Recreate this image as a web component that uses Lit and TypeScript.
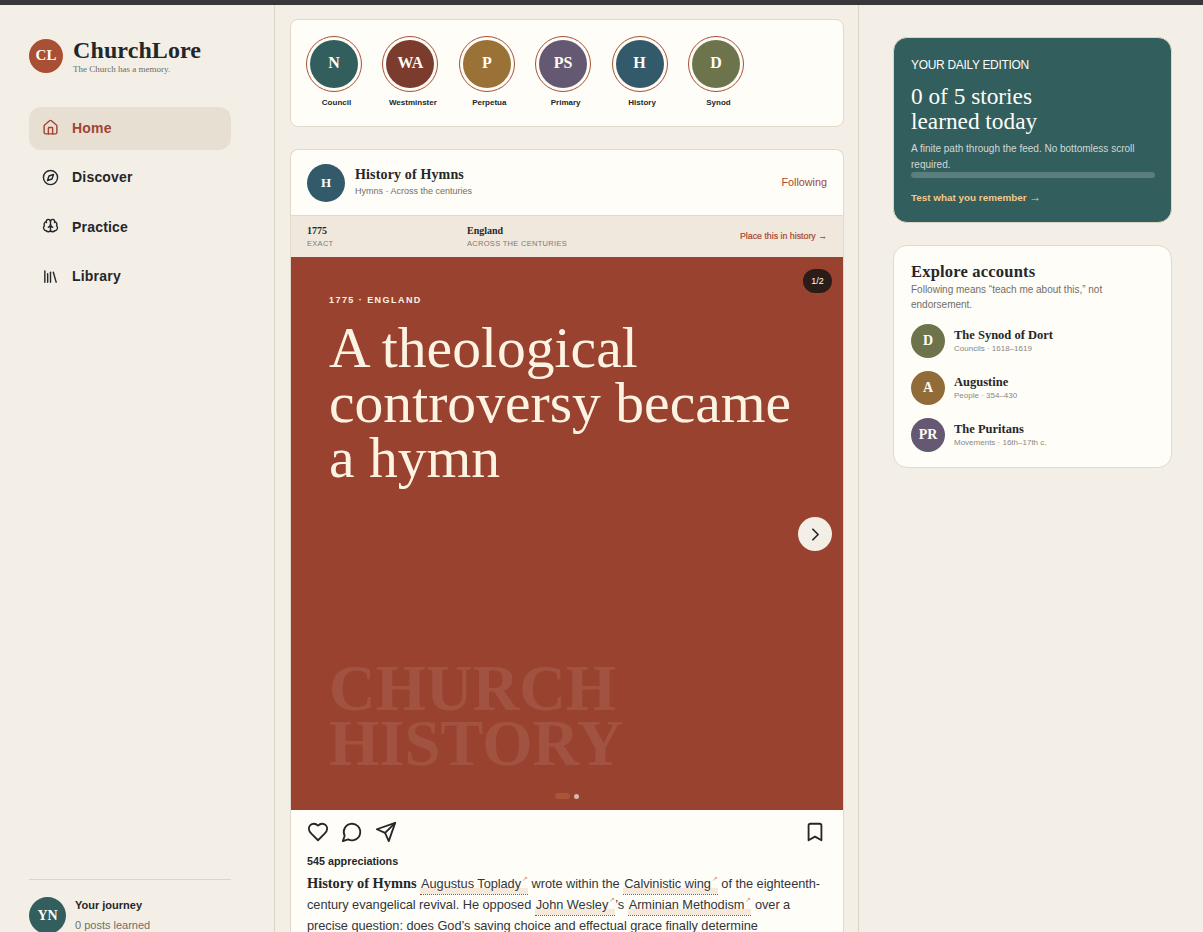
import { LitElement, html, css, svg } from "lit";
import { customElement } from "lit/decorators.js";

const stories = [
  ["N", "Council", "#325e5e"],
  ["WA", "Westminster", "#7b3c2e"],
  ["P", "Perpetua", "#9a7238"],
  ["PS", "Primary", "#655872"],
  ["H", "History", "#335a6a"],
  ["D", "Synod", "#6d744c"],
];
const accounts = [
  ["D", "The Synod of Dort", "Councils · 1618–1619", "#6d744c"],
  ["A", "Augustine", "People · 354–430", "#916c38"],
  ["PR", "The Puritans", "Movements · 16th–17th c.", "#655872"],
];
const ic = (body: unknown, size = 18, sw = 2) => html`<svg width=${size} height=${size} viewBox="0 0 24 24" fill="none" stroke="currentColor" stroke-width=${sw} stroke-linecap="round" stroke-linejoin="round">${body}</svg>`;
const home = svg`<path d="M15 21v-8a1 1 0 0 0-1-1h-4a1 1 0 0 0-1 1v8"/><path d="M3 10a2 2 0 0 1 .709-1.528l7-6a2 2 0 0 1 2.582 0l7 6A2 2 0 0 1 21 10v9a2 2 0 0 1-2 2H5a2 2 0 0 1-2-2z"/>`;
const compass = svg`<circle cx="12" cy="12" r="10"/><path d="m16.24 7.76-2.12 6.36-6.36 2.12 2.12-6.36z"/>`;
const brain = svg`<path d="M12 18V5"/><path d="M15 13a4.17 4.17 0 0 1-3-4 4.17 4.17 0 0 1-3 4"/><path d="M17.6 6.5A3 3 0 1 0 12 5a3 3 0 1 0-5.6 1.5"/><path d="M18 5.1a4 4 0 0 1 2.5 5.9 4 4 0 0 1-2.5 7"/><path d="M18 18a4 4 0 0 1-6 0 4 4 0 0 1-6 0"/><path d="M6 18a4 4 0 0 1-2.5-7A4 4 0 0 1 6 5.1"/>`;
const library = svg`<path d="m16 6 4 14"/><path d="M12 6v14"/><path d="M8 8v12"/><path d="M4 4v16"/>`;
const heart = svg`<path d="M19 14c1.49-1.46 3-3.21 3-5.5A5.5 5.5 0 0 0 16.5 3c-1.76 0-3 .5-4.5 2-1.5-1.5-2.74-2-4.5-2A5.5 5.5 0 0 0 2 8.5c0 2.3 1.5 4.05 3 5.5l7 7Z"/>`;
const comment = svg`<path d="M7.9 20A9 9 0 1 0 4 16.1L2 22Z"/>`;
const send = svg`<path d="M22 2 11 13"/><path d="M22 2 15 22l-4-9-9-4Z"/>`;
const bookmark = svg`<path d="m19 21-7-4-7 4V5a2 2 0 0 1 2-2h10a2 2 0 0 1 2 2v16z"/>`;
const chevron = svg`<path d="m9 18 6-6-6-6"/>`;

@customElement("app-root")
export class AppRoot extends LitElement {
  static styles = css`
    :host { display: block; height: 932px; overflow: hidden; background: #f4efe6; color: #24272a; font-family: "Liberation Sans", Arial, sans-serif; }
    * { box-sizing: border-box; }
    .topbar { height: 5px; background: #38383b; }
    .page { display: grid; grid-template-columns: 275px 584px 1fr; height: 927px; }

    .side { border-right: 1px solid #dcd5c7; padding: 33px 43px 15px 29px; display: flex; flex-direction: column; }
    .brand { display: flex; gap: 10px; height: 35px; align-items: flex-start; }
    .avatar { flex: none; border-radius: 50%; display: flex; align-items: center; justify-content: center; color: #fffdf8; font-family: "Liberation Serif", serif; font-weight: 700; }
    .brand .avatar { width: 34px; height: 34px; background: #a94f33; font-size: 15px; align-self: center; }
    .brand-name { font-family: "Liberation Serif", serif; font-weight: 700; font-size: 24px; line-height: 25px; letter-spacing: 0.1px; }
    .brand-sub { font-family: "Liberation Serif", serif; font-size: 9px; line-height: 11px; margin-top: 1px; color: #6b6b66; }
    nav { margin-top: 34px; display: flex; flex-direction: column; gap: 6.5px; }
    .nav-item { display: flex; align-items: center; gap: 13px; height: 43px; padding: 0 13px 2px; border-radius: 12px; font-weight: 700; font-size: 14px; letter-spacing: 0.2px; color: #24272a; }
    .nav-item.active { background: #e8dfd3; color: #9f4532; }
    .nav-item svg { flex: none; width: 17px; height: 17px; }
    .journey { margin-top: auto; border-top: 1px solid #dcd5c7; padding-top: 17px; display: flex; align-items: center; gap: 9px; }
    .journey .avatar { width: 37px; height: 37px; background: #325e5e; font-size: 14px; }
    .journey b { display: block; font-size: 11px; line-height: 15px; margin-bottom: 5px; }
    .journey span { font-size: 11px; line-height: 15px; color: #6f6f6a; display: block; }

    .main { border-right: 1px solid #dcd5c7; padding: 14px 14px 0 15px; min-width: 0; }
    .card { background: #fffdf8; border: 1px solid #e1d9ca; border-radius: 8px; }
    .stories { height: 108px; padding: 16px 15px 0; display: flex; gap: 15.4px; }
    .story { width: 61px; flex: none; display: flex; flex-direction: column; align-items: center; }
    .ring { width: 56px; height: 56px; border-radius: 50%; border: 1px solid #a94f33; padding: 3px; align-self: flex-start; }
    .ring .avatar { width: 100%; height: 100%; font-size: 16px; padding-bottom: 2px; }
    .story-label { font-size: 8px; font-weight: 700; line-height: 10px; margin-top: 6px; white-space: nowrap; }
    .post { margin-top: 22px; border-radius: 8px 8px 0 0; border-bottom: 0; overflow: hidden; height: 800px; }
    .post-head { height: 65px; display: flex; align-items: center; padding: 0 16px; gap: 10px; }
    .post-head .avatar { width: 38px; height: 38px; background: #335a6a; font-size: 13px; }
    .post-title { font-family: "Liberation Serif", serif; font-weight: 700; font-size: 14px; line-height: 17px; letter-spacing: 0.15px; margin-top: -1px; }
    .post-sub { font-size: 9px; line-height: 13px; color: #6f6f6a; margin-top: 2px; }
    .following { margin-left: auto; font-size: 10.8px; color: #a8472f; padding-bottom: 2px; }
    .meta { height: 42px; background: #f0e8dc; border-top: 1px solid #e1d9ca; display: flex; align-items: center; padding: 0 16px; }
    .meta-col b { display: block; font-family: "Liberation Serif", serif; font-size: 10px; line-height: 13px; }
    .meta-col span { display: block; font-size: 7.5px; line-height: 11px; letter-spacing: 0.3px; color: #7d7a72; margin-top: 1px; }
    .meta-col.year { width: 160px; }
    .place { margin-left: auto; font-size: 8.8px; color: #a8472f; -webkit-text-stroke: 0.2px #a8472f; padding-bottom: 2px; }
    .slide { position: relative; height: 553px; background: #9a4230; overflow: hidden; padding: 38px 38px; color: #fdf3e3; }
    .kicker { font-size: 9px; font-weight: 700; letter-spacing: 1.45px; line-height: 11px; }
    .headline { font-family: "Liberation Serif", serif; font-size: 57.6px; line-height: 55px; margin-top: 14px; font-weight: 400; }
    .watermark { position: absolute; left: 38px; top: 404px; font-family: "Liberation Serif", serif; font-weight: 700; font-size: 64.6px; line-height: 55px; color: rgba(255,255,255,0.085); }
    .count { position: absolute; right: 11px; top: 12px; width: 29px; height: 24px; border-radius: 12px; background: #2b1c18; color: #fff; font-size: 9px; display: flex; align-items: center; justify-content: center; }
    .next { position: absolute; right: 11px; top: 260px; width: 34px; height: 34px; border-radius: 50%; background: #f4efe6; color: #24272a; display: flex; align-items: center; justify-content: center; }
    .next svg { width: 21px; height: 21px; }
    .dots { position: absolute; left: 264px; bottom: 11px; display: flex; gap: 4px; align-items: center; }
    .dots i { display: block; height: 6px; border-radius: 3px; }
    .dots .on { width: 15px; background: #a9553a; }
    .dots .off { width: 5px; height: 5px; background: #dbb7a8; }
    .actions { display: flex; align-items: center; padding: 0 16px; gap: 12px; height: 44px; color: #24272a; }
    .actions svg { width: 22px; height: 22px; display: block; }
    .actions .save { margin-left: auto; margin-right: 1px; }
    .likes { font-size: 10.8px; font-weight: 700; padding: 0 16px; line-height: 14px; }
    .copy { font-size: 12.8px; line-height: 20.8px; padding: 0 16px; margin-top: 5px; color: #33363a; letter-spacing: -0.05px; }
    .copy b { font-family: "Liberation Serif", serif; font-size: 14.4px; letter-spacing: 0; color: #24272a; }
    .term { background: linear-gradient(transparent 66%, #f6e9da 66%); border-bottom: 1px dotted #a94f33; padding: 0 7px 3px 1px; position: relative; }
    .term::after { content: "↗"; position: absolute; right: 0; top: -3px; font-size: 7px; color: #d98a6c; line-height: 12px; }

    .rail { padding: 32px 31px 0 34px; display: flex; flex-direction: column; gap: 22px; }
    .daily { height: 186px; background: #325e5e; border: 1px solid #dcd5c7; border-radius: 14px; padding: 20px 16px 0 17px; color: #fffdf8; }
    .eyebrow { font-size: 12px; line-height: 15px; letter-spacing: -0.32px; }
    .daily h2 { margin: 11px 0 0; font-family: "Liberation Serif", serif; font-weight: 400; font-size: 23.3px; line-height: 25px; }
    .daily p { margin: 7px 0 0; font-size: 10px; line-height: 15.5px; color: rgba(255,253,248,0.78); }
    .bar { height: 6px; border-radius: 3px; background: rgba(255,255,255,0.2); }
    .cta { margin-top: 13px; font-size: 9.9px; font-weight: 700; color: #f2c98a; line-height: 14px; }
    .arrow { font-size: 1.2em; font-weight: 400; line-height: 1; }
    .explore { height: 223px; border-radius: 14px; padding: 16px 17px; }
    .explore h3 { margin: 0; font-family: "Liberation Serif", serif; font-size: 16.5px; line-height: 20px; font-weight: 700; letter-spacing: 0.2px; }
    .explore p { margin: 0; font-size: 10px; line-height: 15px; color: #6f6f6a; }
    .acct { display: flex; gap: 9px; align-items: center; height: 34px; margin-top: 13px; }
    .acct:first-of-type { margin-top: 12px; }
    .acct .avatar { width: 34px; height: 34px; font-size: 14px; }
    .acct b { display: block; font-family: "Liberation Serif", serif; font-size: 12.5px; line-height: 14px; }
    .acct span { display: block; font-size: 8px; line-height: 11px; color: #8a877f; margin-top: 1px; }
  `;

  render() {
    const nav = [["Home", home], ["Discover", compass], ["Practice", brain], ["Library", library]] as const;
    return html`
      <div class="topbar"></div>
      <div class="page">
        <aside class="side">
          <div class="brand">
            <div class="avatar">CL</div>
            <div>
              <div class="brand-name">ChurchLore</div>
              <div class="brand-sub">The Church has a memory.</div>
            </div>
          </div>
          <nav>
            ${nav.map(([l, i], n) => html`<div class="nav-item ${n === 0 ? "active" : ""}">${ic(i)}<span>${l}</span></div>`)}
          </nav>
          <div class="journey">
            <div class="avatar">YN</div>
            <div><b>Your journey</b><span>0 posts learned</span></div>
          </div>
        </aside>
        <main class="main">
          <section class="card stories">
            ${stories.map(([a, l, c]) => html`<div class="story">
              <div class="ring"><div class="avatar" style="background:${c}">${a}</div></div>
              <div class="story-label">${l}</div>
            </div>`)}
          </section>
          <article class="card post">
            <header class="post-head">
              <div class="avatar">H</div>
              <div>
                <div class="post-title">History of Hymns</div>
                <div class="post-sub">Hymns · Across the centuries</div>
              </div>
              <div class="following">Following</div>
            </header>
            <div class="meta">
              <div class="meta-col year"><b>1775</b><span>EXACT</span></div>
              <div class="meta-col"><b>England</b><span>ACROSS THE CENTURIES</span></div>
              <div class="place">Place this in history →</div>
            </div>
            <div class="slide">
              <div class="kicker">1775 · ENGLAND</div>
              <div class="headline">A theological controversy became a hymn</div>
              <div class="watermark">CHURCH<br />HISTORY</div>
              <div class="count">1/2</div>
              <div class="next">${ic(chevron, 21, 2)}</div>
              <div class="dots"><i class="on"></i><i class="off"></i></div>
            </div>
            <div class="actions">
              ${ic(heart)}${ic(comment)}${ic(send)}
              <span class="save">${ic(bookmark)}</span>
            </div>
            <div class="likes">545 appreciations</div>
            <div class="copy"><b>History of Hymns</b> <span class="term">Augustus Toplady</span> wrote within the <span class="term">Calvinistic wing</span> of the eighteenth-century evangelical revival. He opposed <span class="term">John Wesley</span>’s <span class="term">Arminian Methodism</span> over a precise question: does God’s saving choice and effectual grace finally determine salvation,…</div>
          </article>
        </main>
        <aside class="rail">
          <section class="daily">
            <div class="eyebrow">YOUR DAILY EDITION</div>
            <h2>0 of 5 stories<br />learned today</h2>
            <p>A finite path through the feed. No bottomless scroll required.</p>
            <div class="bar"></div>
            <div class="cta">Test what you remember <span class="arrow">→</span></div>
          </section>
          <section class="card explore">
            <h3>Explore accounts</h3>
            <p>Following means “teach me about this,” not endorsement.</p>
            ${accounts.map(([a, n, s, c]) => html`<div class="acct">
              <div class="avatar" style="background:${c}">${a}</div>
              <div><b>${n}</b><span>${s}</span></div>
            </div>`)}
          </section>
        </aside>
      </div>
    `;
  }
}
